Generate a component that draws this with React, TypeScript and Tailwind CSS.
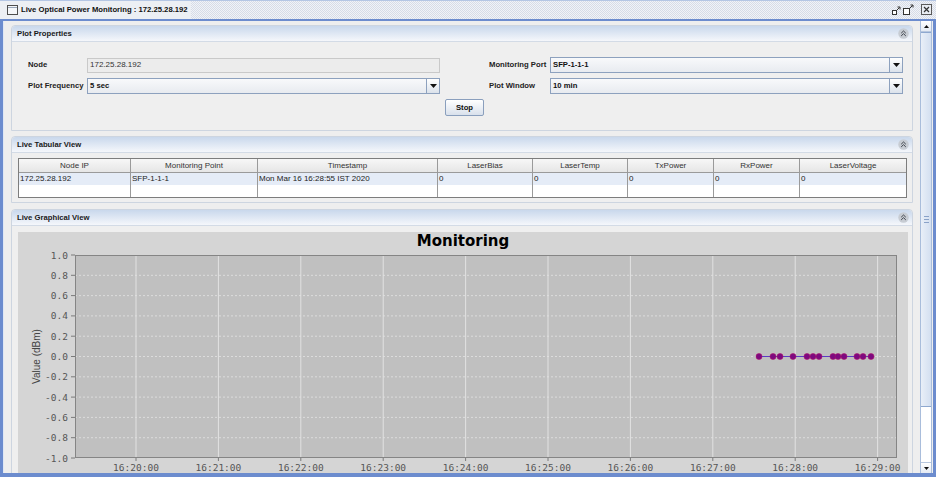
import React from "react";

const UI = "font-['Liberation_Sans',Arial,sans-serif]";

function CollapseIcon() {
  return (
    <svg width="11" height="11" viewBox="0 0 11 11">
      <circle cx="5.5" cy="5.5" r="5.2" fill="#c7ccd3" />
      <path d="M3.2 5.2 L5.5 3 L7.8 5.2 M3.2 7.9 L5.5 5.7 L7.8 7.9" stroke="#3e434b" strokeWidth="1" fill="none" />
    </svg>
  );
}

function Panel({
  title,
  className,
  bodyClass,
  children,
}: {
  title: string;
  className?: string;
  bodyClass?: string;
  children?: React.ReactNode;
}) {
  return (
    <div className={`shrink-0 flex flex-col rounded-t-[4px] border border-[#cdd5e0] bg-[#efefef] ${className ?? ""}`}>
      <div className="h-[16px] shrink-0 flex items-center justify-between pl-[5px] pr-[3px] rounded-t-[4px] border-b border-[#d3dbe6] bg-gradient-to-b from-[#c9d8ec] to-[#f5f7fb]">
        <span className="font-bold text-[7.7px] text-[#1a1a1a]">{title}</span>
        <CollapseIcon />
      </div>
      <div className={bodyClass}>{children}</div>
    </div>
  );
}

function Combo({ value }: { value: string }) {
  return (
    <div className="w-[353px] h-[16px] flex border border-[#8da1be] bg-gradient-to-b from-[#f8f9fb] to-[#e8ebf0]">
      <span className="flex-1 pl-[2px] flex items-center font-bold text-[7.7px] text-[#111]">{value}</span>
      <span className="w-[13px] flex items-center justify-center border-l border-[#8da1be] bg-gradient-to-b from-[#ffffff] to-[#dbe2eb]">
        <svg width="7" height="4" viewBox="0 0 7 4">
          <path d="M0 0 H7 L3.5 4 Z" fill="#111" />
        </svg>
      </span>
    </div>
  );
}

const columns = [
  { name: "Node IP", w: "w-[112px]", v: "172.25.28.192" },
  { name: "Monitoring Point", w: "w-[127px]", v: "SFP-1-1-1" },
  { name: "Timestamp", w: "w-[180px]", v: "Mon Mar 16 16:28:55 IST 2020" },
  { name: "LaserBias", w: "w-[95px]", v: "0" },
  { name: "LaserTemp", w: "w-[95px]", v: "0" },
  { name: "TxPower", w: "w-[86px]", v: "0" },
  { name: "RxPower", w: "w-[86px]", v: "0" },
  { name: "LaserVoltage", w: "w-[106px]", v: "0" },
];

function Chart() {
  const x0 = 57;
  const y0 = 23;
  const pw = 822;
  const ph = 203;
  const yStep = ph / 10;
  const xs = Array.from({ length: 10 }, (_, i) => 118 + 82.4 * i);
  const pts = [741, 755, 762, 775, 789, 795, 801, 815, 820, 826, 839, 845, 853];
  const zeroY = y0 + yStep * 5;
  return (
    <svg width="890" height="250" viewBox="0 0 890 250" className="block">
      <rect x="0" y="0" width="890" height="250" fill="#d5d5d5" />
      <text x="445" y="14" textAnchor="middle" fontFamily="'DejaVu Sans',sans-serif" fontWeight="bold" fontSize="15" fill="#000">
        Monitoring
      </text>
      <rect x={x0} y={y0} width={pw} height={ph} fill="#c0c0c0" />
      {Array.from({ length: 11 }, (_, i) => {
        const y = y0 + yStep * i;
        const v = Math.round((1 - 0.2 * i) * 10) / 10;
        return (
          <g key={i}>
            {i > 0 && i < 10 && (
              <line x1={x0} x2={x0 + pw} y1={y} y2={y} stroke="#dcdcdc" strokeWidth="1" strokeDasharray="2 2" />
            )}
            <line x1={x0 - 4} x2={x0} y1={y} y2={y} stroke="#7a7a7a" />
            <text x="50" y={y + 3.5} textAnchor="end" fontFamily="'DejaVu Sans Mono',monospace" fontSize="9.5" fill="#555">
              {v.toFixed(1)}
            </text>
          </g>
        );
      })}
      {xs.map((x, i) => (
        <g key={i}>
          <line x1={x} x2={x} y1={y0} y2={y0 + ph} stroke="#e2e2e2" strokeWidth="1" />
          <line x1={x} x2={x} y1={y0 + ph} y2={y0 + ph + 3} stroke="#7a7a7a" />
          <text x={x} y={239} textAnchor="middle" fontFamily="'DejaVu Sans Mono',monospace" fontSize="9.5" fill="#555">
            {`16:2${i}:00`}
          </text>
        </g>
      ))}
      <rect x={x0 + 0.5} y={y0 + 0.5} width={pw - 1} height={ph - 1} fill="none" stroke="#858585" />
      <text
        x="0"
        y="0"
        transform={`translate(22 ${zeroY}) rotate(-90)`}
        textAnchor="middle"
        fontFamily="'Liberation Sans',Arial,sans-serif"
        fontSize="10"
        fill="#444"
      >
        Value (dBm)
      </text>
      <line x1={pts[0]} x2={pts[pts.length - 1]} y1={zeroY} y2={zeroY} stroke="#5b3cc4" strokeWidth="1" />
      {pts.map((x, i) => (
        <circle key={i} cx={x} cy={zeroY} r="3" fill="#7d0a80" stroke="#b0106a" strokeWidth="0.6" />
      ))}
    </svg>
  );
}

function ScrollBar() {
  return (
    <div className="w-[15px] shrink-0 pl-[2px] pr-[1px] bg-[#eeeeee]">
      <div className="h-full flex flex-col border-x border-[#a9bddb] bg-white">
        <div className="h-[11px] shrink-0 flex items-center justify-center border-b border-[#b7c7df] bg-gradient-to-b from-[#ffffff] to-[#e4eaf3]">
          <svg width="5" height="3" viewBox="0 0 5 3">
            <path d="M0 3 H5 L2.5 0 Z" fill="#111" />
          </svg>
        </div>
        <div className="h-[375px] shrink-0 flex flex-col items-center justify-center gap-[2px] border-y border-[#8ea8cf] bg-gradient-to-r from-[#e9eff8] to-[#d3dff0]">
          <span className="w-[5px] h-px bg-[#8aa2c8]" />
          <span className="w-[5px] h-px bg-[#8aa2c8]" />
          <span className="w-[5px] h-px bg-[#8aa2c8]" />
        </div>
        <div className="flex-1" />
        <div className="h-[11px] shrink-0 flex items-center justify-center border-t border-[#b7c7df] bg-gradient-to-b from-[#ffffff] to-[#e4eaf3]">
          <svg width="5" height="3" viewBox="0 0 5 3">
            <path d="M0 0 H5 L2.5 3 Z" fill="#111" />
          </svg>
        </div>
      </div>
    </div>
  );
}

export default function App() {
  return (
    <div className={`w-[936px] h-[477px] overflow-hidden flex flex-col bg-[#6c8cce] text-[8px] leading-none whitespace-nowrap ${UI}`}>
      {/* title bar */}
      <div className="h-[19px] shrink-0 flex items-center border-t border-[#b4c6e4] bg-[repeating-conic-gradient(#d6dce8_0%_25%,#f1f3f7_0%_50%)] bg-[length:2px_2px]">
        <div className="h-full flex items-center pl-[7px] pr-[3px] bg-[#eceff4]">
          <svg width="11" height="10" viewBox="0 0 11 10" className="mr-[3px]">
            <rect x="0.5" y="0.5" width="10" height="9" fill="#f4f6f9" stroke="#4d4d4d" />
            <line x1="1" y1="2.5" x2="10" y2="2.5" stroke="#9aa7ba" />
          </svg>
          <span className="font-bold text-[7.7px] text-[#111]">Live Optical Power Monitoring : 172.25.28.192</span>
        </div>
        <svg width="44" height="14" viewBox="0 0 44 14" className="ml-auto mr-[2px]">
          <rect x="2.5" y="7.5" width="4" height="4" fill="#fff" stroke="#333" />
          <path d="M7 7 L9.5 4.5 M7.5 4 H10 V6.5" stroke="#333" fill="none" />
          <rect x="13.5" y="5.5" width="6" height="6" fill="#fff" stroke="#333" />
          <path d="M20 5 L22.5 2.5 M20.5 2 H23 V4.5" stroke="#333" fill="none" />
          <rect x="31.5" y="1.5" width="10" height="10" fill="#e9edf3" stroke="#5a5a5a" />
          <path d="M34 4 L39 9 M39 4 L34 9" stroke="#333" strokeWidth="1.2" />
        </svg>
      </div>

      {/* frame body */}
      <div className="flex-1 min-h-0 flex mt-[2px] mx-[3px] mb-[4px] bg-[#eeeeee] border-l border-[#dfe7f4]">
        <div className="flex-1 min-w-0 overflow-hidden flex flex-col pl-[7px] pr-[5px] pt-[4px]">
          <Panel title="Plot Properties" bodyClass="h-[88px] pl-[16px] pt-[15px]">
            <div className="w-[875px] flex flex-col gap-[5px]">
              <div className="h-[16px] flex items-center">
                <span className="w-[59px] font-bold text-[7.7px] text-[#222]">Node</span>
                <div className="w-[353px] h-[15px] flex items-center pl-[2px] border border-[#c9c9c9] bg-[#ececec] text-[#333]">
                  172.25.28.192
                </div>
                <span className="ml-[49px] w-[61px] font-bold text-[7.7px] text-[#222]">Monitoring Port</span>
                <Combo value="SFP-1-1-1" />
              </div>
              <div className="h-[16px] flex items-center">
                <span className="w-[59px] font-bold text-[7.7px] text-[#222]">Plot Frequency</span>
                <Combo value="5 sec" />
                <span className="ml-[49px] w-[61px] font-bold text-[7.7px] text-[#222]">Plot Window</span>
                <Combo value="10 min" />
              </div>
              <div className="flex justify-center pr-[2px]">
                <button className="w-[39px] h-[17px] flex items-center justify-center border border-[#8a9fbd] rounded-[2px] bg-gradient-to-b from-[#ffffff] to-[#d9e1ec] font-bold text-[7.7px] text-[#111]">
                  Stop
                </button>
              </div>
            </div>
          </Panel>

          <Panel title="Live Tabular View" className="mt-[5px]" bodyClass="h-[49px] pl-[6px] pt-[5px]">
            <div className="w-[889px] h-[40px] flex border border-[#7d7d7d] bg-white">
              {columns.map((c, i) => (
                <div key={c.name} className={`${c.w} shrink-0 flex flex-col ${i < columns.length - 1 ? "border-r border-[#9a9a9a]" : ""}`}>
                  <div className="h-[14px] shrink-0 flex items-center justify-center border-b border-[#9a9a9a] bg-gradient-to-b from-[#f7f7f7] to-[#e6e6e6] text-[#333]">
                    {c.name}
                  </div>
                  <div className="h-[12px] shrink-0 flex items-center pl-[1px] bg-[#e5ecf7] text-[#222]">{c.v}</div>
                  <div className="flex-1 bg-white" />
                </div>
              ))}
            </div>
          </Panel>

          <Panel title="Live Graphical View" className="mt-[6px] flex-1" bodyClass="flex-1 pl-[6px] pt-[6px] overflow-hidden">
            <Chart />
          </Panel>
        </div>
        <ScrollBar />
      </div>
    </div>
  );
}
